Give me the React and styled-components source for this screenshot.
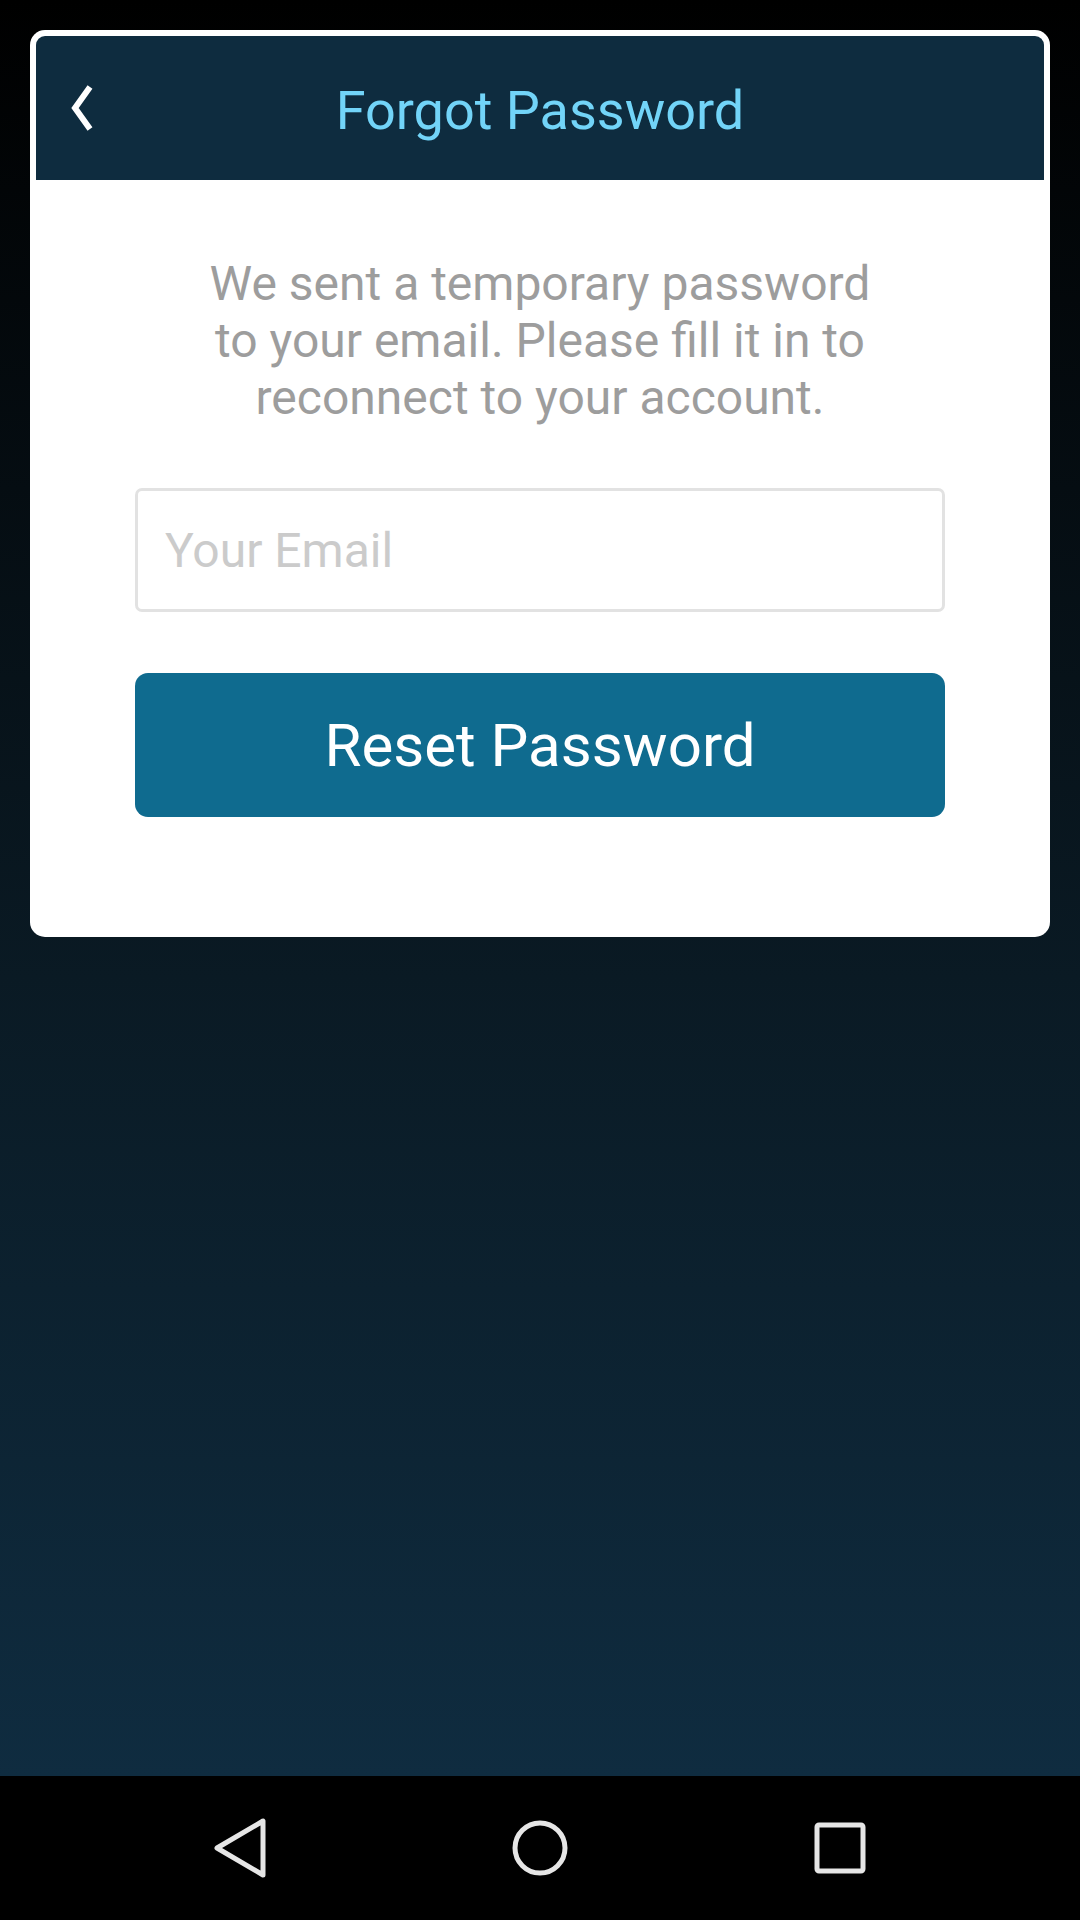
import React from 'react';
import styled, { createGlobalStyle } from 'styled-components';

const GlobalStyle = createGlobalStyle`
	html, body {
		margin: 0;
		padding: 0;
		background: #000;
	}
	* {
		box-sizing: border-box;
	}
`;

const Screen = styled.div`
	width: 1080px;
	height: 1920px;
	display: flex;
	flex-direction: column;
	font-family: Roboto, 'Liberation Sans', sans-serif;
`;

const Main = styled.main`
	flex: 1;
	padding: 30px;
	background: linear-gradient(to bottom, #000000 0%, #0a1a24 55%, #0f2c40 100%);
`;

const Card = styled.section`
	background: #fff;
	border-radius: 15px;
	padding: 6px 6px 120px;
`;

const Header = styled.header`
	position: relative;
	height: 144px;
	display: flex;
	align-items: center;
	justify-content: center;
	padding-top: 4px;
	background: #0e2c3f;
	border-radius: 9px 9px 0 0;
`;

const BackButton = styled.button`
	position: absolute;
	left: 34px;
	top: 50%;
	transform: translateY(-50%);
	display: flex;
	padding: 0;
	border: 0;
	background: none;
`;

const Title = styled.h1`
	margin: 0;
	font-size: 54px;
	font-weight: 400;
	color: #72d4f8;
`;

const Body = styled.div`
	display: flex;
	flex-direction: column;
	align-items: center;
	padding: 75px 99px 0;
`;

const Message = styled.p`
	margin: 0 0 62px;
	max-width: 680px;
	font-size: 48px;
	line-height: 57px;
	text-align: center;
	color: #9d9d9d;
`;

const EmailInput = styled.input`
	width: 100%;
	height: 124px;
	padding: 0 27px;
	border: 3px solid #e2e2e2;
	border-radius: 7px;
	font-family: inherit;
	font-size: 48px;
	color: #333;
	outline: none;
	&::placeholder {
		color: #cbcbcb;
	}
`;

const SubmitButton = styled.button`
	width: 100%;
	height: 144px;
	margin-top: 61px;
	border: 0;
	border-radius: 13px;
	background: #0f6b8f;
	font-family: inherit;
	font-size: 60px;
	color: #fff;
`;

const NavBar = styled.nav`
	height: 144px;
	display: flex;
	align-items: center;
	justify-content: center;
	gap: 236px;
	background: #000;
`;

const NavIcon = styled.svg`
	width: 64px;
	height: 64px;
	fill: none;
	stroke: #e6e6e6;
	stroke-width: 5;
	stroke-linejoin: round;
`;

const App = () => {
	return (
		<>
			<GlobalStyle />
			<Screen>
				<Main>
					<Card>
						<Header>
							<BackButton type="button" aria-label="Back">
								<svg width="24" height="46" viewBox="0 0 24 46">
									<polyline
										points="20,2 5,23 20,44"
										fill="none"
										stroke="#fff"
										strokeWidth="6"
									/>
								</svg>
							</BackButton>
							<Title>Forgot Password</Title>
						</Header>
						<Body>
							<Message>
								We sent a temporary password to your email. Please fill it in to
								reconnect to your account.
							</Message>
							<EmailInput type="email" placeholder="Your Email" />
							<SubmitButton type="button">Reset Password</SubmitButton>
						</Body>
					</Card>
				</Main>
				<NavBar>
					<NavIcon viewBox="0 0 64 64">
						<path d="M55 5 L55 59 L9 32 Z" />
					</NavIcon>
					<NavIcon viewBox="0 0 64 64">
						<circle cx="32" cy="32" r="25" />
					</NavIcon>
					<NavIcon viewBox="0 0 64 64">
						<rect x="9" y="9" width="46" height="46" rx="2" />
					</NavIcon>
				</NavBar>
			</Screen>
		</>
	);
};

export default App;
